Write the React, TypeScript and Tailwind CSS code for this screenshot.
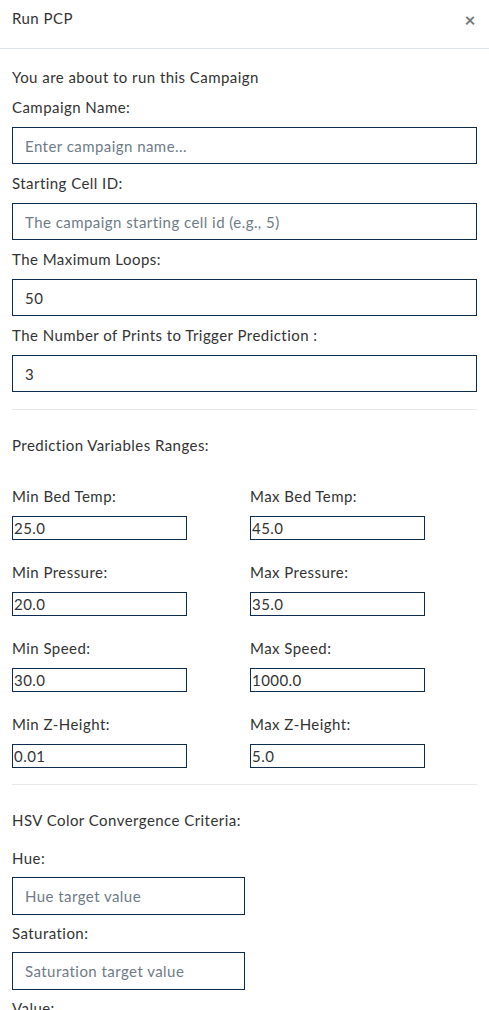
import React from "react";

const font = { fontFamily: "Lato, 'Open Sans', sans-serif" };

function Field({ label, placeholder, value }: { label: string; placeholder?: string; value?: string }) {
  return (
    <div>
      <p className="leading-5 mb-[10px]">{label}</p>
      <input
        className="w-full h-[37px] border border-[#0d2c4e] px-3 text-[#333] tracking-[0.03em] placeholder:text-[#6e7b87] outline-none mb-[9px]"
        placeholder={placeholder}
        defaultValue={value}
      />
    </div>
  );
}

function SmallField({ label, value }: { label: string; value: string }) {
  return (
    <div>
      <p className="leading-5 mb-[10px]">{label}</p>
      <input
        className="w-[175px] h-[24px] border border-[#0d2c4e] px-[1px] text-[15px] text-[#333] tracking-[0.03em] outline-none"
        defaultValue={value}
      />
    </div>
  );
}

function ShortField({ label, placeholder }: { label: string; placeholder: string }) {
  return (
    <div>
      <p className="leading-5 mb-[9px]">{label}</p>
      <input
        className="w-[233px] h-[38px] border border-[#0d2c4e] px-3 text-[#333] tracking-[0.03em] placeholder:text-[#6e7b87] outline-none mb-[8px]"
        placeholder={placeholder}
      />
    </div>
  );
}

export default function App() {
  const ranges = [
    ["Min Bed Temp:", "25.0", "Max Bed Temp:", "45.0"],
    ["Min Pressure:", "20.0", "Max Pressure:", "35.0"],
    ["Min Speed:", "30.0", "Max Speed:", "1000.0"],
    ["Min Z-Height:", "0.01", "Max Z-Height:", "5.0"],
  ];

  return (
    <div className="bg-white text-[15px] text-[#333] tracking-[0.03em] min-h-screen" style={font}>
      {/* header */}
      <div className="flex justify-between items-center h-[49px] px-3 border-b border-[#dde3ea]">
        <h1 className="leading-5 -mt-[12px]">Run PCP</h1>
        <span className="text-[#777] text-[19px] font-bold leading-none -mt-[10px] mr-[1px]">×</span>
      </div>

      <div className="px-3 pt-[18px]">
        <p className="leading-5 mb-[10px]">You are about to run this Campaign</p>
        <Field label="Campaign Name:" placeholder="Enter campaign name..." />
        <Field label="Starting Cell ID:" placeholder="The campaign starting cell id (e.g., 5)" />
        <Field label="The Maximum Loops:" value="50" />
        <Field label="The Number of Prints to Trigger Prediction :" value="3" />

        <hr className="border-[#e6e8ea] mt-[8px]" />

        <p className="leading-5 mt-[25px] mb-[31px]">Prediction Variables Ranges:</p>

        <div className="flex flex-col gap-[22px]">
          {ranges.map(([l1, v1, l2, v2]) => (
            <div key={l1} className="grid grid-cols-2 gap-[63px] w-[413px]">
              <SmallField label={l1} value={v1} />
              <SmallField label={l2} value={v2} />
            </div>
          ))}
        </div>

        <hr className="border-[#e6e8ea] mt-[16px]" />

        <p className="leading-5 mt-[25px] mb-[18px]">HSV Color Convergence Criteria:</p>
        <ShortField label="Hue:" placeholder="Hue target value" />
        <ShortField label="Saturation:" placeholder="Saturation target value" />
        <ShortField label="Value:" placeholder="Value target value" />
      </div>
    </div>
  );
}
